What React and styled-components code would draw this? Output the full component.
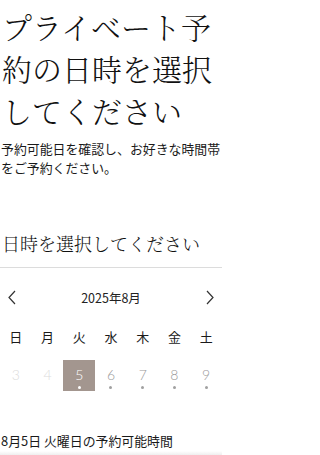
import React from "react";
import styled, { createGlobalStyle } from "styled-components";

const Global = createGlobalStyle`
  html, body { margin: 0; padding: 0; background: #fff; }
  body {
    font-family: "Noto Sans CJK JP", "Noto Sans", sans-serif;
    color: #1e1e1e;
    overflow: hidden;
  }
`;

const serif = `"Noto Serif CJK JP", "Noto Sans CJK JP", serif`;

const Page = styled.div`
  width: 222px;
  display: flex;
  flex-direction: column;
`;

const Title = styled.h1`
  margin: 5px 0 0;
  padding: 0 2px;
  font-family: ${serif};
  font-size: 30px;
  font-weight: 300;
  line-height: 42px;
  color: #111;
`;

const Lead = styled.p`
  margin: 8px 0 0;
  padding: 0 0 0 1px;
  font-size: 12.9px;
  line-height: 19px;
  color: #1a1a1a;
`;

const SectionTitle = styled.h2`
  margin: 52px 0 0;
  padding: 0 2px;
  font-family: ${serif};
  font-size: 18px;
  font-weight: 300;
  line-height: 28px;
  color: #111;
`;

const Divider = styled.hr`
  margin: 10px 0 0;
  border: 0;
  height: 1px;
  background: #dcdcdc;
`;

const MonthNav = styled.div`
  margin-top: 15px;
  height: 28px;
  padding: 0 8px;
  display: flex;
  align-items: center;
  justify-content: space-between;
`;

const NavButton = styled.span`
  display: flex;
  width: 8px;
  height: 16px;
  align-items: center;
`;

const MonthLabel = styled.span`
  font-size: 12.5px;
  color: #222;
`;

const Grid = styled.div`
  display: grid;
  grid-template-columns: repeat(7, 1fr);
  margin-top: ${(p) => p.$mt}px;
`;

const Weekday = styled.div`
  height: 20px;
  line-height: 20px;
  text-align: center;
  font-size: 13px;
  color: #1a1a1a;
`;

const DayCell = styled.div`
  height: 31px;
  display: flex;
  flex-direction: column;
  align-items: center;
  padding-top: 7px;
  box-sizing: border-box;
  background: ${(p) => (p.$selected ? "#a3968f" : "transparent")};
  color: ${(p) => (p.$selected ? "#fff" : p.$past ? "#dcdcdc" : "#9a9a9a")};
`;

const DayNum = styled.span`
  font-family: Lato, "Noto Sans", sans-serif;
  font-weight: 300;
  font-size: 14px;
  line-height: 16px;
`;

const Dot = styled.span`
  margin-top: 3px;
  width: 3px;
  height: 3px;
  border-radius: 50%;
  background: ${(p) => (p.$selected ? "#fff" : "#a0a0a0")};
  visibility: ${(p) => (p.$hidden ? "hidden" : "visible")};
`;

const AvailTitle = styled.div`
  margin-top: 41px;
  padding: 0 1px;
  font-size: 12.9px;
  line-height: 18px;
  color: #1a1a1a;
`;

const BottomFade = styled.div`
  margin-top: 1px;
  height: 8px;
  background: linear-gradient(#ffffff, #dedede);
`;

const Chevron = ({ dir }) => (
  <svg width="8" height="15" viewBox="0 0 8 15" fill="none">
    <polyline
      points={dir === "left" ? "7,1 1,7.5 7,14" : "1,1 7,7.5 1,14"}
      stroke="#333"
      strokeWidth="1.2"
      strokeLinejoin="miter"
    />
  </svg>
);

const weekdays = ["日", "月", "火", "水", "木", "金", "土"];
const days = [
  { n: 3, past: true },
  { n: 4, past: true },
  { n: 5, selected: true },
  { n: 6 },
  { n: 7 },
  { n: 8 },
  { n: 9 },
];

export default function App() {
  return (
    <Page>
      <Global />
      <Title>プライベート予約の日時を選択してください</Title>
      <Lead>予約可能日を確認し、お好きな時間帯をご予約ください。</Lead>
      <SectionTitle>日時を選択してください</SectionTitle>
      <Divider />
      <MonthNav>
        <NavButton>
          <Chevron dir="left" />
        </NavButton>
        <MonthLabel>2025年8月</MonthLabel>
        <NavButton>
          <Chevron dir="right" />
        </NavButton>
      </MonthNav>
      <Grid $mt={16}>
        {weekdays.map((w) => (
          <Weekday key={w}>{w}</Weekday>
        ))}
      </Grid>
      <Grid $mt={13}>
        {days.map((d) => (
          <DayCell key={d.n} $selected={d.selected} $past={d.past}>
            <DayNum>{d.n}</DayNum>
            <Dot $selected={d.selected} $hidden={d.past} />
          </DayCell>
        ))}
      </Grid>
      <AvailTitle>8月5日 火曜日の予約可能時間</AvailTitle>
      <BottomFade />
    </Page>
  );
}
